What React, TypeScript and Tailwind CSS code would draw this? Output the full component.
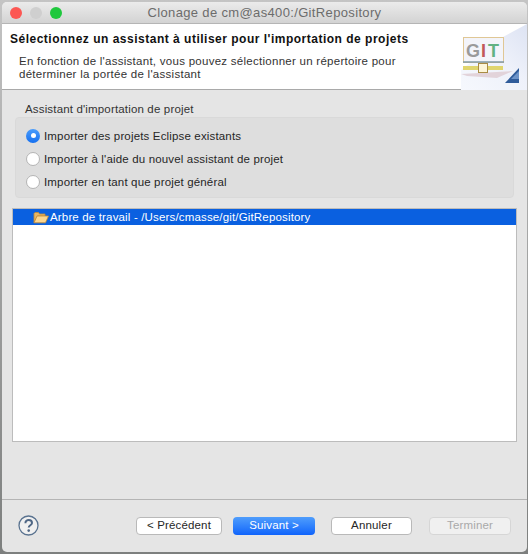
import React from "react";

const font = { fontFamily: '"Liberation Sans", Arial, sans-serif' };

function Radio({ checked, label }: { checked?: boolean; label: string }) {
  return (
    <div className="flex h-[23px] items-center">
      {checked ? (
        <span className="flex h-[14px] w-[14px] items-center justify-center rounded-full bg-gradient-to-b from-[#4a9cfb] to-[#1470f0]">
          <span className="h-[5px] w-[5px] rounded-full bg-white" />
        </span>
      ) : (
        <span className="h-[14px] w-[14px] rounded-full border border-[#b4b4b4] bg-white" />
      )}
      <span className="ml-[4px] pt-[2px] text-[11.5px] tracking-[0.16px] text-[#262626]">{label}</span>
    </div>
  );
}

function Btn({ label, width, kind }: { label: string; width: string; kind?: "primary" | "disabled" }) {
  const cls =
    kind === "primary"
      ? "bg-gradient-to-b from-[#4f9dfc] to-[#0f63fb] text-white"
      : kind === "disabled"
        ? "border border-[#d6d6d6] bg-[#f0f0f0] text-[#a9a9a9]"
        : "border border-[#b9b9b9] bg-white text-[#262626]";
  return (
    <div className={`flex h-[18px] items-center justify-center rounded-[4px] pt-[1px] text-[11.5px] tracking-[0.16px] ${width} ${cls}`}>
      {label}
    </div>
  );
}

function GitBanner() {
  return (
    <svg width="66" height="66" viewBox="0 0 66 66" className="shrink-0">
      <defs>
        <linearGradient id="bannerBg" x1="0" y1="1" x2="1" y2="0">
          <stop offset="0" stopColor="#f6f8fd" />
          <stop offset="0.55" stopColor="#eef1fa" />
          <stop offset="1" stopColor="#dde3f3" />
        </linearGradient>
      </defs>
      <path d="M0 66 L0 46 L40 14 L66 0 L66 66 Z" fill="url(#bannerBg)" />
      <path d="M0 50 L52 47 L36 54 L6 52 Z" fill="#e2d3da" />
      <rect x="2.5" y="13.5" width="40" height="25" fill="#f3f4fa" stroke="#e0c795" />
      <path d="M2 38 H43" stroke="#7f98a6" strokeWidth="1.5" />
      <text x="5" y="33" fontSize="18" fontWeight="700" fontFamily="Liberation Sans" fill="#9a9a9a">G</text>
      <text x="20" y="33" fontSize="18" fontWeight="700" fontFamily="Liberation Sans" fill="#c2575a">I</text>
      <text x="27" y="33" fontSize="18" fontWeight="700" fontFamily="Liberation Sans" fill="#62b283">T</text>
      <path d="M2 44 H42" stroke="#e0d56e" strokeWidth="4" />
      <rect x="17.5" y="39.5" width="9" height="9" fill="#fdf5d8" stroke="#a98b43" />
      <path d="M44 59 L58 59 L58 44 Z" fill="#2f5b9a" />
      <path d="M50 55 L58 55 L58 47 Z" fill="#6d93c8" />
    </svg>
  );
}

function FolderIcon() {
  return (
    <svg width="16" height="13" viewBox="0 0 16 13" className="shrink-0">
      <path d="M1 11.5 V2.5 L2 1.5 H5.5 L6.5 3 H12 V5 H4.5 Z" fill="#e8b664" stroke="#c28a35" strokeWidth="0.8" />
      <path d="M1 11.8 L4 5 H15.5 L12.5 11.8 Z" fill="#fbd58e" stroke="#c28a35" strokeWidth="0.8" />
    </svg>
  );
}

export default function App() {
  return (
    <div className="h-[554px] w-[528px] overflow-hidden bg-gradient-to-b from-[#c4c4c4] to-[#7d7f7e] pb-[2px] pl-[2px] pr-[1px] pt-[2px]" style={font}>
      <div className="flex h-[550px] flex-col overflow-hidden rounded-[5px] bg-[#e5e5e5]">
        <div className="relative flex h-[21px] shrink-0 items-center justify-center bg-gradient-to-b from-[#ebebeb] to-[#d3d3d3] text-[13px] tracking-[0.35px] text-[#6c6c6c]">
          <div className="absolute left-[8px] top-[5px] flex gap-[8px]">
            <span className="h-[12px] w-[12px] rounded-full bg-[#fc5753]" />
            <span className="h-[12px] w-[12px] rounded-full bg-[#cfcfcf]" />
            <span className="h-[12px] w-[12px] rounded-full bg-[#1fc83d]" />
          </div>
          Clonage de cm@as400:/GitRepository
        </div>
        <div className="flex h-[67px] shrink-0 justify-between border-b border-t border-b-[#a9a9a9] border-t-[#b5b5b5] bg-white">
          <div className="pl-[8px] pt-[8px]">
            <div className="text-[12px] font-bold leading-[15px] tracking-[0.5px] text-[#111]">
              Sélectionnez un assistant à utiliser pour l'importation de projets
            </div>
            <div className="mt-[8px] pl-[9px] text-[11.5px] leading-[13px] tracking-[0.27px] text-[#333]">
              En fonction de l'assistant, vous pouvez sélectionner un répertoire pour
              <br />
              déterminer la portée de l'assistant
            </div>
          </div>
          <GitBanner />
        </div>

        <div className="flex flex-1 flex-col px-[10px]">
          <div className="mt-[12px] pl-[13px] text-[11.5px] leading-[14px] tracking-[0.16px] text-[#333]">
            Assistant d'importation de projet
          </div>
          <div className="mx-[3px] mt-[1px] h-[81px] rounded-[4px] border border-[#d9d9d9] bg-[#dedede] pl-[10px] pt-[6px]">
            <Radio checked label="Importer des projets Eclipse existants" />
            <Radio label="Importer à l'aide du nouvel assistant de projet" />
            <Radio label="Importer en tant que projet général" />
          </div>
          <div className="mt-[10px] h-[234px] border border-[#bcbcbc] bg-white">
            <div className="flex h-[16px] items-center bg-[#0a60e0] pl-[20px] text-[11.5px] tracking-[0.16px] text-white">
              <FolderIcon />
              <span className="ml-[1px] pt-[2px]">Arbre de travail - /Users/cmasse/git/GitRepository</span>
            </div>
          </div>
        </div>

        <div className="flex h-[53px] shrink-0 items-center border-t border-[#b4b4b4] pb-[1px] pl-[16px] pr-[16px]">
          <svg width="21" height="21" viewBox="0 0 21 21" className="shrink-0">
            <circle cx="10.5" cy="10.5" r="9.5" fill="#f0f0f0" stroke="#5a7390" strokeWidth="1.3" />
            <path d="M7.4 8.2 C7.4 3.9 14 4.2 14 8 C14 10.3 10.7 10.3 10.7 12.6" fill="none" stroke="#4f6785" strokeWidth="2" />
            <circle cx="10.7" cy="15.6" r="1.3" fill="#4f6785" />
          </svg>
          <div className="ml-auto flex">
            <Btn label="< Précédent" width="w-[86px]" />
            <div className="ml-[11px]">
              <Btn label="Suivant >" width="w-[82px]" kind="primary" />
            </div>
            <div className="ml-[16px]">
              <Btn label="Annuler" width="w-[81px]" />
            </div>
            <div className="ml-[17px]">
              <Btn label="Terminer" width="w-[82px]" kind="disabled" />
            </div>
          </div>
        </div>
      </div>
    </div>
  );
}
